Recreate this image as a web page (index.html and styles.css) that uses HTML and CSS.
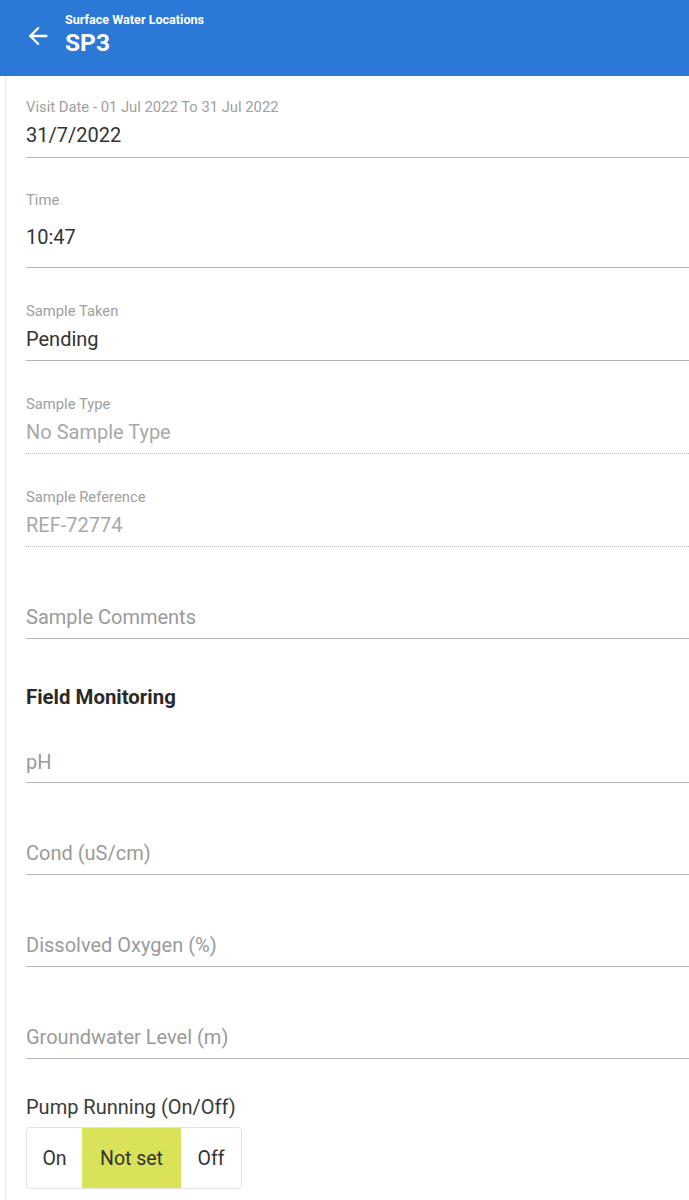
FILE: index.html
```html
<!DOCTYPE html>
<html lang="en">
<head>
<meta charset="utf-8">
<title>SP3</title>
<link rel="stylesheet" href="styles.css">
</head>
<body>
<header class="appbar">
  <svg class="back" viewBox="0 0 24 24" width="28" height="28" aria-hidden="true"><path d="M20 11H7.83l5.59-5.59L12 4l-8 8 8 8 1.41-1.41L7.83 13H20v-2z" fill="#fff"/></svg>
  <div class="titles">
    <div class="subtitle">Surface Water Locations</div>
    <div class="title">SP3</div>
  </div>
</header>
<main class="content">
  <div class="field first">
    <div class="label">Visit Date - 01 Jul 2022 To 31 Jul 2022</div>
    <div class="value">31/7/2022</div>
  </div>
  <div class="field time">
    <div class="label">Time</div>
    <div class="value">10:47</div>
  </div>
  <div class="field">
    <div class="label">Sample Taken</div>
    <div class="value">Pending</div>
  </div>
  <div class="field disabled">
    <div class="label">Sample Type</div>
    <div class="value">No Sample Type</div>
  </div>
  <div class="field disabled">
    <div class="label">Sample Reference</div>
    <div class="value">REF-72774</div>
  </div>
  <div class="field empty">
    <div class="label"></div>
    <div class="value placeholder">Sample Comments</div>
  </div>
  <h2 class="section">Field Monitoring</h2>
  <div class="field empty near">
    <div class="value placeholder">pH</div>
  </div>
  <div class="field empty">
    <div class="label"></div>
    <div class="value placeholder">Cond (uS/cm)</div>
  </div>
  <div class="field empty">
    <div class="label"></div>
    <div class="value placeholder">Dissolved Oxygen (%)</div>
  </div>
  <div class="field empty">
    <div class="label"></div>
    <div class="value placeholder">Groundwater Level (m)</div>
  </div>
  <div class="pump">
    <div class="pump-label">Pump Running (On/Off)</div>
    <div class="toggle">
      <span class="opt on">On</span>
      <span class="opt active">Not set</span>
      <span class="opt off">Off</span>
    </div>
  </div>
</main>
</body>
</html>
```
FILE: styles.css
```css
html, body {
  margin: 0;
  padding: 0;
  background: #fff;
  font-family: Roboto, "Liberation Sans", Arial, sans-serif;
}

.appbar {
  height: 76px;
  background: #2b78d6;
  display: flex;
  align-items: center;
  box-sizing: border-box;
  padding-left: 24px;
  color: #fff;
}

.back {
  display: block;
  margin-right: 13px;
  margin-top: -4px;
}

.titles {
  display: flex;
  flex-direction: column;
  margin-top: -6px;
}

.subtitle {
  font-size: 12.6px;
  font-weight: 700;
  line-height: 14px;
}

.title {
  font-size: 24.5px;
  font-weight: 700;
  line-height: 28px;
  margin-top: 2px;
}

.content {
  margin-left: 5px;
  border-left: 1px solid #ececec;
  padding-left: 20px;
  padding-bottom: 20px;
}

.field {
  padding-top: 35px;
  border-bottom: 1px solid #b5b5b5;
}

.field.first {
  padding-top: 23px;
}

.label {
  font-size: 14.8px;
  line-height: 16px;
  height: 16px;
  color: #a0a0a0;
}

.value {
  margin-top: 8px;
  font-size: 20px;
  line-height: 24px;
  color: #333;
  padding-bottom: 9px;
}

.field.first .value {
  padding-bottom: 10px;
}

.field.time {
  padding-top: 34px;
}

.field.time .value {
  margin-top: 17px;
  padding-bottom: 18px;
}

.field.disabled {
  padding-top: 35px;
  border-bottom: 1px dotted #bdbdbd;
}

.field.disabled .value {
  color: #a8a8a8;
}

.placeholder {
  color: #9a9a9a;
}

.field.empty {
  padding-top: 34px;
}

.field.empty .value {
  padding-bottom: 9px;
}

.section {
  margin: 46px 0 0;
  font-size: 20.4px;
  line-height: 24px;
  font-weight: 700;
  color: #2a2a2a;
}

.field.empty.near {
  padding-top: 41px;
}

.field.near .value {
  margin-top: 0;
  padding-bottom: 8px;
}

.pump {
  padding-top: 36px;
}

.pump-label {
  font-size: 20px;
  line-height: 24px;
  color: #3a3a3a;
}

.toggle {
  margin-top: 8px;
  display: inline-flex;
  height: 62px;
  border: 1px solid #e2e2e2;
  border-radius: 4px;
  overflow: hidden;
  box-sizing: border-box;
}

.opt {
  display: flex;
  align-items: center;
  justify-content: center;
  font-size: 19.5px;
  color: #333;
}

.opt.on {
  width: 55px;
}

.opt.active {
  width: 99px;
  background: #d9e258;
}

.opt.off {
  width: 60px;
}
```
